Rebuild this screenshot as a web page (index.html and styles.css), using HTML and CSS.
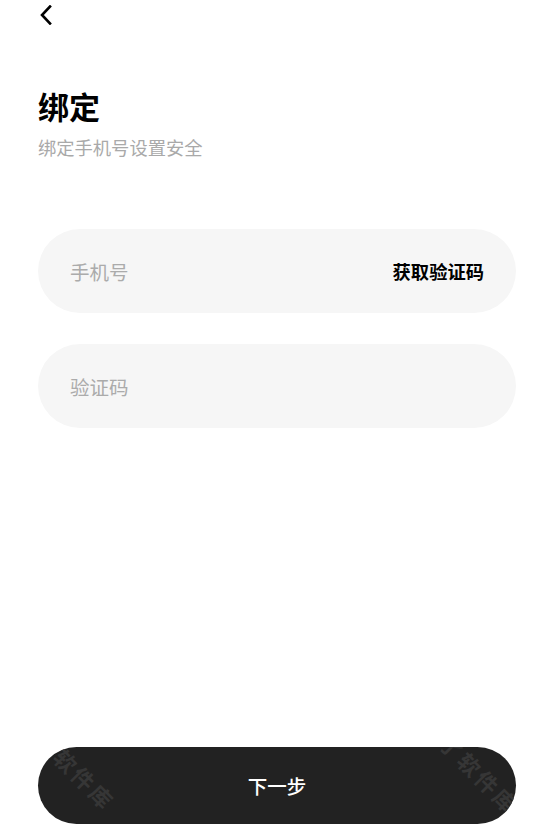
FILE: index.html
```html
<!DOCTYPE html>
<html lang="zh-CN">

<head>
    <meta charset="UTF-8">
    <meta name="viewport" content="width=device-width, initial-scale=1.0">
    <title>绑定</title>

    <link rel="stylesheet" href="styles.css">
</head>

<body>

    <div class="page">
        <div class="topbar">
            <button class="back" aria-label="返回">
                <svg width="14" height="20" viewBox="0 0 14 20">
                    <path d="M11 1.5 L3 10 L11 18.5" fill="none" stroke="#000" stroke-width="2.6" stroke-linecap="square" />
                </svg>
            </button>
        </div>

        <div class="heading">
            <h1>绑定</h1>
            <p>绑定手机号设置安全</p>
        </div>

        <div class="fields">
            <div class="field">
                <input type="text" placeholder="手机号">
                <span class="code-btn">获取验证码</span>
            </div>
            <div class="field">
                <input type="text" placeholder="验证码">
            </div>
        </div>

        <button class="next">
            下一步
            <!-- watermark from the original capture -->
            <span class="mark mark-left">软件库</span>
            <span class="mark mark-right">了软件库</span>
        </button>
    </div>

</body>

</html>
```

FILE: styles.css
```css
html,
body {
    margin: 0;
    padding: 0;
    background-color: #ffffff;
}

body {
    font-family: 'Noto Sans CJK SC', 'Noto Sans', sans-serif;
    color: #000;
}

.page {
    height: 826px;
    box-sizing: border-box;
    padding: 0 38px 2px 38px;
    display: flex;
    flex-direction: column;
}

.topbar {
    height: 30px;
}

.back {
    border: none;
    background: none;
    padding: 0;
    margin: 5px 0 0 1px;
    display: block;
}

.heading {
    margin-top: 56px;
}

.heading h1 {
    margin: 0;
    font-size: 31px;
    line-height: 40px;
    font-weight: 700;
}

.heading p {
    margin: 9px 0 0 0;
    font-size: 18.3px;
    line-height: 24px;
    color: #a9a9a9;
}

.fields {
    margin-top: 70px;
    display: flex;
    flex-direction: column;
    gap: 31px;
}

.field {
    height: 84px;
    border-radius: 42px;
    background-color: #f6f6f6;
    display: flex;
    align-items: center;
    padding: 0 32px;
}

.field input {
    flex: 1;
    min-width: 0;
    border: none;
    outline: none;
    background: transparent;
    font-family: inherit;
    font-size: 19.5px;
    color: #000;
    padding: 0;
}

.field input::placeholder {
    color: #ababab;
}

.code-btn {
    font-size: 18.3px;
    font-weight: 700;
    color: #000;
}

.next {
    margin-top: auto;
    position: relative;
    overflow: hidden;
    height: 77px;
    border: none;
    border-radius: 39px;
    background-color: #222222;
    color: #fff;
    font-family: inherit;
    font-size: 19.5px;
    font-weight: 500;
    width: 100%;
}

.mark {
    position: absolute;
    font-size: 22px;
    font-weight: 700;
    color: #363636;
    transform: rotate(45deg);
    transform-origin: left top;
    white-space: nowrap;
    letter-spacing: 3px;
}

.mark-left {
    left: 32px;
    top: -6px;
}

.mark-right {
    left: 418px;
    top: -20px;
}
```
